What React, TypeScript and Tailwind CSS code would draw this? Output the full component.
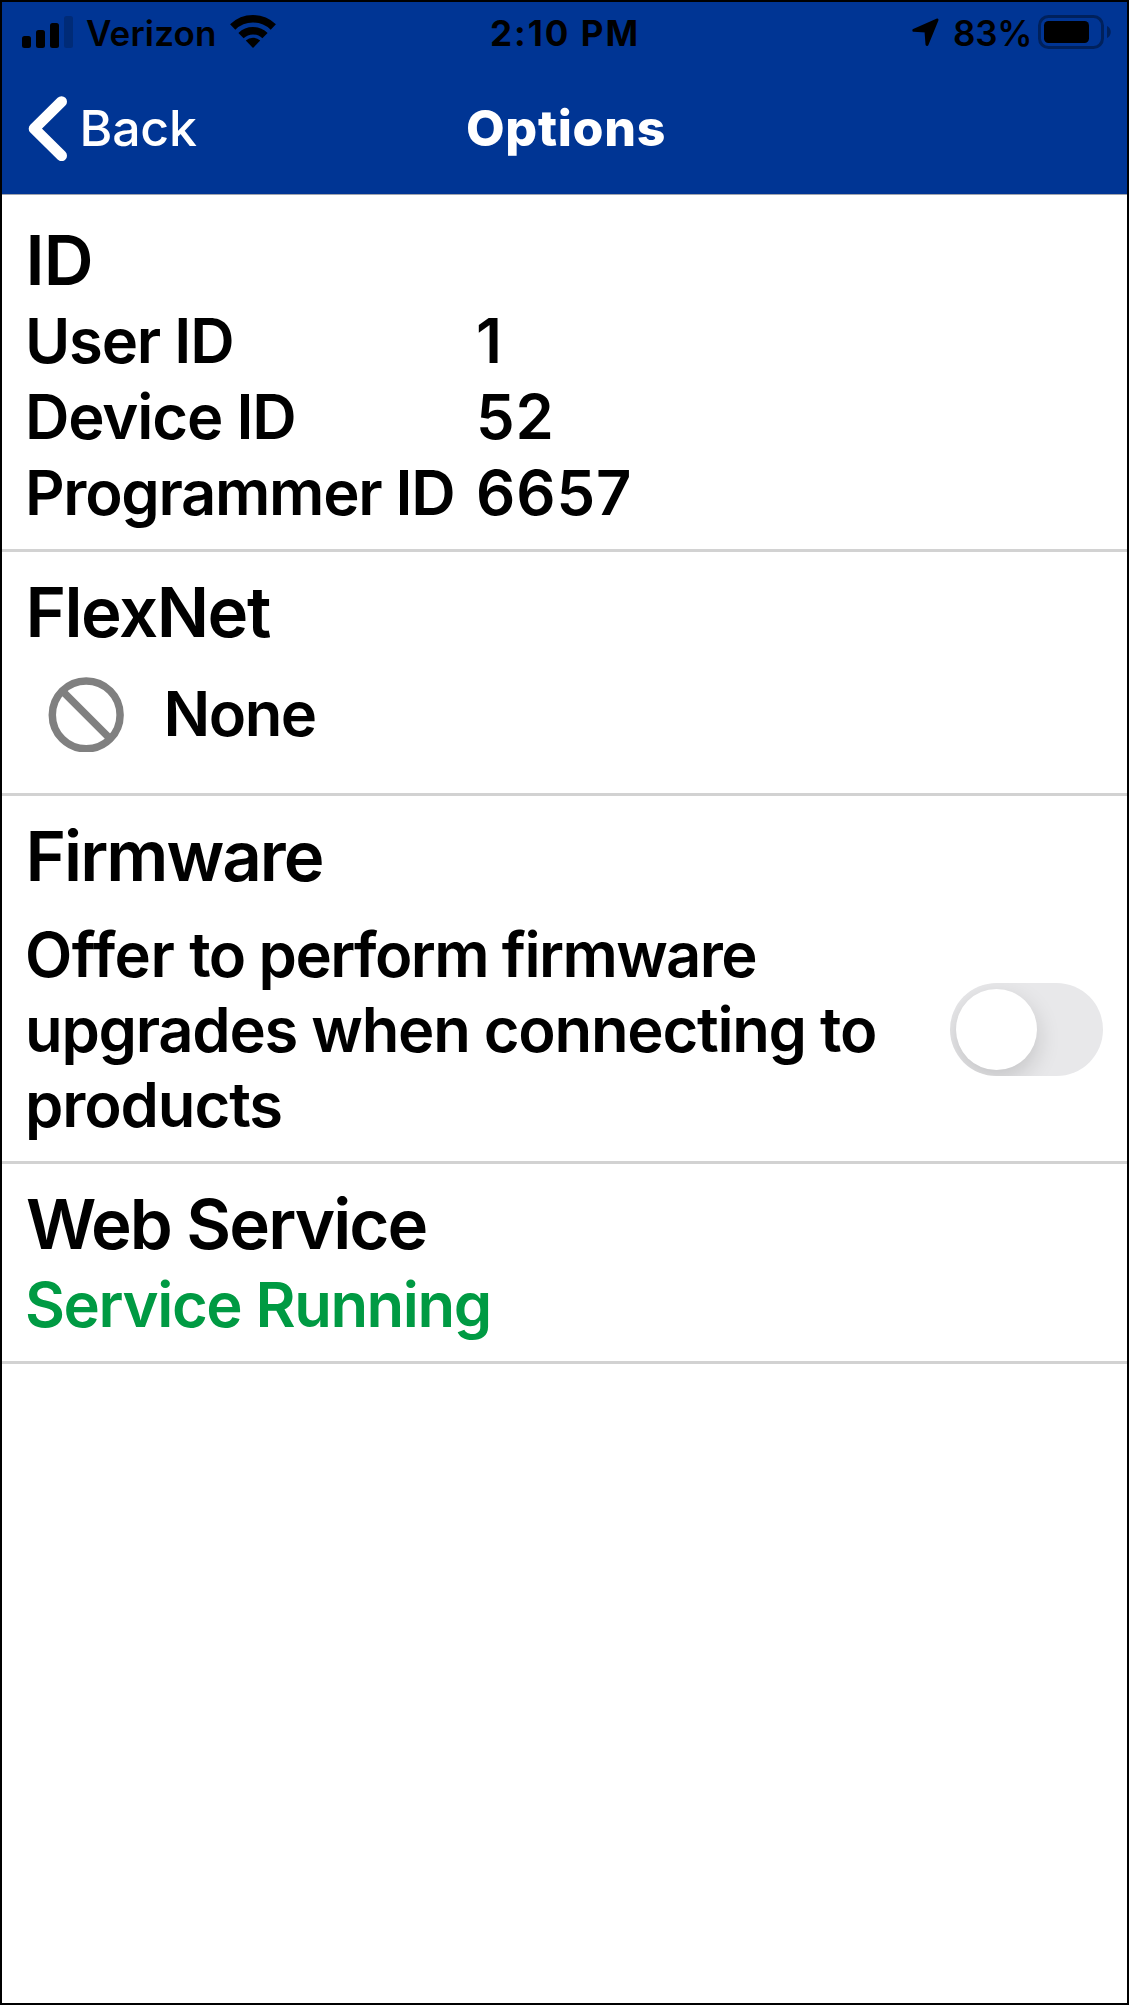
import type { ReactNode } from 'react';

function StatusBar() {
  return (
    <div className="mt-[10px] flex h-[42px] items-start text-[35px] leading-[42px] text-black">
      <div className="flex w-[488px] items-start pl-5">
        <svg className="mt-1 h-8 w-[51px] shrink-0" viewBox="0 0 51 32">
          <rect x="0" y="20" width="9" height="12" rx="2.5" />
          <rect x="14" y="14" width="9" height="18" rx="2.5" />
          <rect x="28" y="7" width="9" height="25" rx="2.5" />
          <rect x="42" y="0" width="9" height="32" rx="2.5" fill="#002b77" />
        </svg>
        <span className="ml-[13px] w-[144px] shrink-0 font-semibold tracking-[0.15px] whitespace-nowrap">Verizon</span>
        <svg className="mt-[3px] h-[34px] w-[46px] shrink-0" viewBox="0 0 46 34">
          <path d="M2.7 12a29.2 29.2 0 0 1 40.6 0M11 20.6a17.2 17.2 0 0 1 24 0" fill="none" stroke="#000" strokeWidth="7.5" />
          <path d="M23 33l-7.2-7.4a10.3 10.3 0 0 1 14.4 0z" />
        </svg>
      </div>
      <span className="w-[421px] font-bold tracking-[2px] whitespace-nowrap">2:10 PM</span>
      <svg className="mt-[6px] h-[30px] w-[29px] shrink-0" viewBox="0 0 29 30">
        <path d="M26 2 2.8 12.3 15 13.1 16 26.5z" strokeWidth="3" stroke="#000" strokeLinejoin="round" />
      </svg>
      <span className="ml-[13px] w-[85px] shrink-0 font-semibold tracking-[-0.19px]">83%</span>
      <svg className="mt-[3px] h-[34px] w-[74px] shrink-0" viewBox="0 0 74 34">
        <rect x="1.5" y="1.5" width="63" height="31" rx="9" fill="none" stroke="#00215c" strokeWidth="3" />
        <rect x="6" y="6" width="45" height="22" rx="4.5" />
        <path d="M69 11c5 2 5 10 0 12z" fill="#00215c" />
      </svg>
    </div>
  );
}

function NavBar() {
  return (
    <div className="mt-[41px] flex h-[66px] items-start text-[50px] leading-[60px] whitespace-nowrap text-white">
      <svg className="ml-[25px] h-[66px] w-[42px] shrink-0" viewBox="0 0 42 66">
        <path d="M34.5 6.7 7.2 33.7l27.3 27" fill="none" stroke="#fff" strokeWidth="11" strokeLinecap="round" strokeLinejoin="round" />
      </svg>
      <span className="ml-[10.5px] mt-[2.5px] w-[386.5px] font-medium tracking-[-0.2px]">Back</span>
      <span className="mt-[2.5px] font-extrabold tracking-[0.7px]">Options</span>
    </div>
  );
}

function Section({ title, spacing, className, children }: { title: string; spacing: string; className: string; children: ReactNode }) {
  return (
    <section className={`border-b-[3px] border-[#d2d2d2] ${className}`}>
      <h2 className={`text-[69px] leading-[84px] font-semibold ${spacing}`}>{title}</h2>
      {children}
    </section>
  );
}

const ids = [
  { label: 'User ID', value: '1', tracking: 'tracking-[-1.2px]' },
  { label: 'Device ID', value: '52', tracking: 'tracking-[-1.15px]' },
  { label: 'Programmer ID', value: '6657', tracking: 'tracking-[-1.3px]' },
];

export default function App() {
  return (
    <div className="flex h-[2005px] w-[1129px] flex-col overflow-hidden border-2 border-black bg-white font-['Inter',sans-serif] text-black">
      <header className="h-[193px] shrink-0 overflow-hidden border-b border-[#a0a4ae] bg-[#003594]">
        <StatusBar />
        <NavBar />
      </header>
      <main className="text-[61.5px] leading-[76px] font-semibold whitespace-nowrap">
        <Section title="ID" spacing="pl-[23.5px] tracking-[-0.9px]" className="h-[357px] pt-[23px]">
          <dl className="mt-px pl-[23px]">
            {ids.map((r) => (
              <div key={r.label} className="flex">
                <dt className={`w-[451px] ${r.tracking}`}>{r.label}</dt>
                <dd className="tracking-[0.9px]">{r.value}</dd>
              </div>
            ))}
          </dl>
        </Section>
        <Section title="FlexNet" spacing="pl-[23.5px] tracking-[-1.5px]" className="h-[244px] pt-[18px]">
          <div className="mt-[22px] flex items-center pl-[46px]">
            <svg className="h-[76px] w-[76px]" viewBox="0 0 76 76" fill="none" stroke="#808080" strokeWidth="7.5">
              <circle cx="38.2" cy="38.9" r="33.9" />
              <path d="M14.5 15.2 61.5 62.2" />
            </svg>
            <span className="ml-[39.5px] tracking-[-1.5px]">None</span>
          </div>
        </Section>
        <Section title="Firmware" spacing="pl-[23.5px] tracking-[-1.98px]" className="h-[368px] pt-[18px]">
          <div className="mt-[19px] flex items-center justify-between pr-6 pl-[23px] leading-[75px]">
            <p className="tracking-[-1.26px]">
              <span className="block tracking-[-1.6px]">
                <span className="tracking-[-0.5px]">Offer </span>to perform firmware
              </span>
              <span className="block">upgrades when connecting to</span>
              <span className="block tracking-[-1.1px]">products</span>
            </p>
            <button type="button" role="switch" aria-checked="false" aria-label="Offer firmware upgrades" className="flex h-[93px] w-[153px] items-center overflow-hidden rounded-full bg-[#e8e8ea] pl-[6px]">
              <span className="h-[81px] w-[81px] rounded-full bg-white shadow-[0_9px_24px_rgba(0,0,0,0.16)]" />
            </button>
          </div>
        </Section>
        <Section title="Web Service" spacing="pl-6 tracking-[-1.95px]" className="h-[200px] pt-[18px]">
          <p className="mt-px pl-[23px] tracking-[-1.4px] text-[#009a43]">Service Running</p>
        </Section>
      </main>
    </div>
  );
}
